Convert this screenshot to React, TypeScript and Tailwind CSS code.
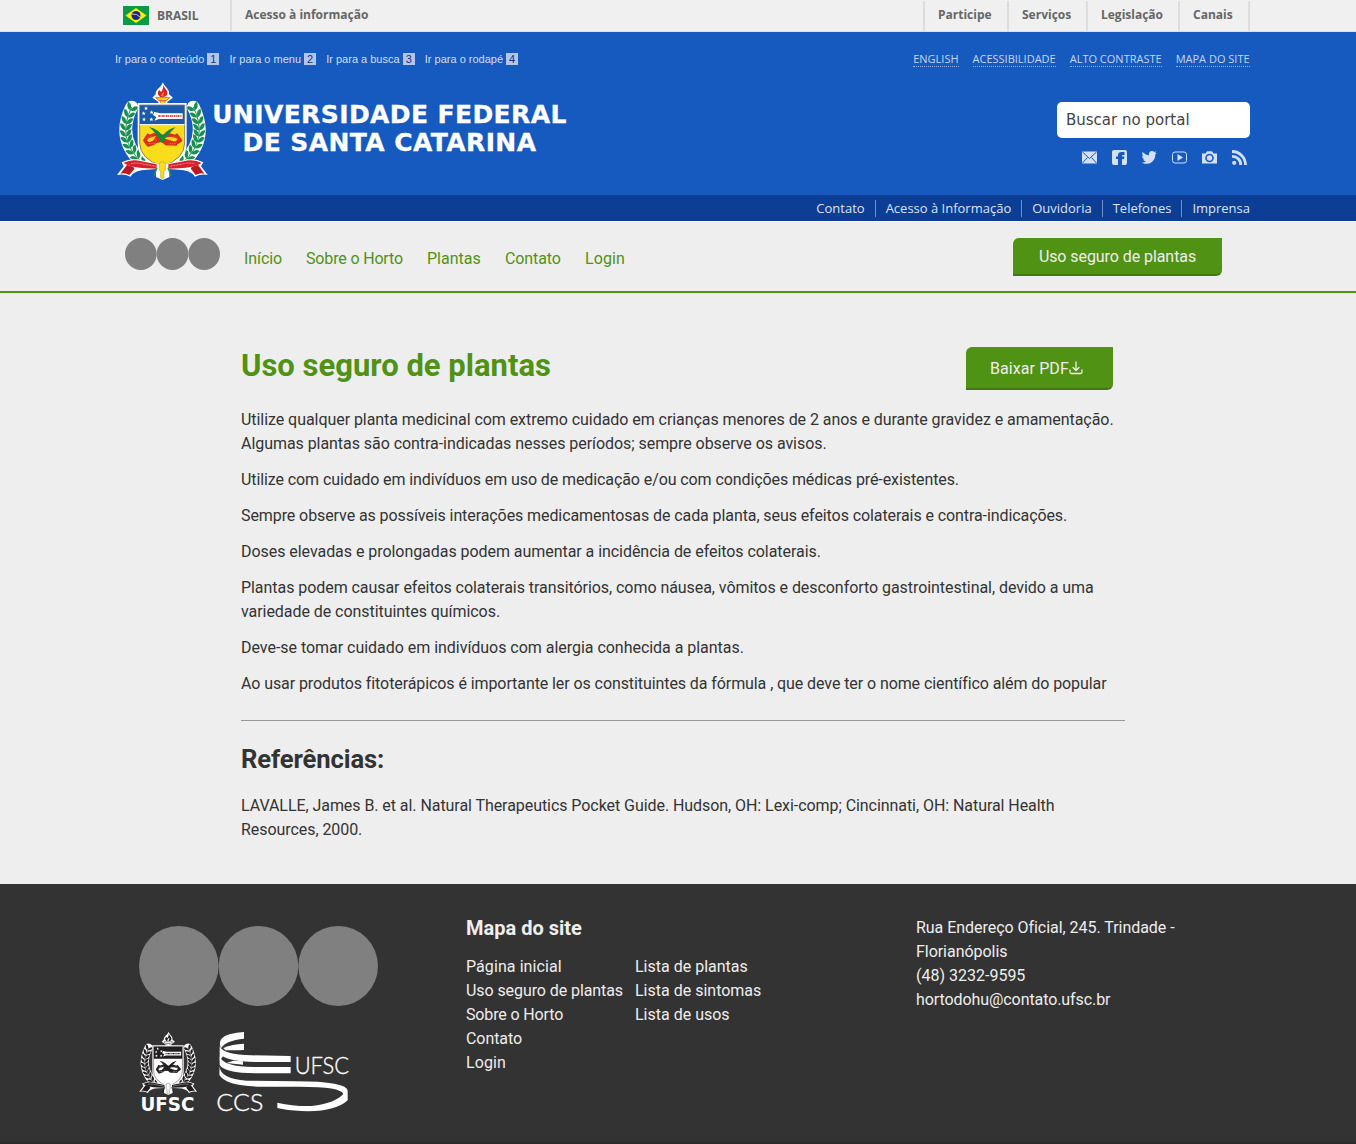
import React from "react";

type Leaf = { x: number; y: number; r: number };

function branchLeaves(): Leaf[] {
  const out: Leaf[] = [];
  const n = 9;
  for (let i = 0; i <= n; i++) {
    const t = i / n;
    const u = 1 - t;
    const x = u * u * 80 + 2 * u * t * 33 + t * t * 110;
    const y = u * u * 98 + 2 * u * t * 190 + t * t * 260;
    const angle = (Math.atan2(2 * u * 92 + 2 * t * 70, 2 * u * -47 + 2 * t * 77) * 180) / Math.PI;
    out.push({ x, y, r: angle });
  }
  return out;
}

const leaves = branchLeaves();

function Branch({ fill, stroke }: { fill: string; stroke: string }) {
  return (
    <g fill={fill}>
      <path d="M80 96Q33 190 110 262" fill="none" stroke={stroke} strokeWidth="38" strokeLinecap="round" />
      <path d="M80 96Q33 190 110 262" fill="none" stroke={fill} strokeWidth="3" />
      {leaves.map((l, i) => (
        <g key={i} transform={`translate(${l.x} ${l.y}) rotate(${l.r})`}>
          <path d="M9 0Q9 15 -11 18Q-13 3 9 0Z" />
          <path d="M9 0Q9 -15 -11 -18Q-13 -3 9 0Z" />
        </g>
      ))}
    </g>
  );
}

function Crest({ mono = false }: { mono?: boolean }) {
  const w = "#fff";
  const k = "#231f20";
  const red = mono ? k : "#d8202c";
  const green = mono ? k : "#17904f";
  const gold = mono ? w : "#f9dc1c";
  const figure = mono ? k : "#dc2f1c";
  return (
    <g strokeLinejoin="round">
      <Branch fill={green} stroke={w} />
      <g transform="translate(345 0) scale(-1 1)">
        <Branch fill={green} stroke={w} />
      </g>
      <path d="M174 22C168 38 150 44 152 58L142 68L160 80V92H187V80L204 68L192 58C196 44 178 36 174 22Z" fill={w} />
      <path d="M175 30C178 42 192 48 186 60Q182 68 166 66Q152 56 163 45Q168 54 171 48Q175 40 175 30Z" fill={red} />
      <path d="M167 62Q172 52 178 50Q176 60 174 65Z" fill={mono ? w : "#f47c20"} />
      <path d="M152 68H194L184 77H162Z" fill={gold} stroke={red} strokeWidth="2" />
      <path d="M166 77H180V92H166Z" fill={gold} stroke={red} strokeWidth="1.5" />
      <path d="M98 84H245V205Q245 258 172 280Q98 258 98 205Z" fill={w} />
      <path d="M104 90H239V204Q239 252 172 274Q104 252 104 204Z" fill={gold} stroke={mono ? k : "#555"} strokeWidth="2" />
      <path d="M105 91H238V148H105Z" fill={mono ? k : "#1c5aa8"} />
      <path d="M104 149H239" stroke={w} strokeWidth="3" />
      <path d="M148 111L166 115H233V132H162L148 137L154 126L144 120Z" fill={w} />
      <path d="M160 123H230" stroke={mono ? k : "#dc4855"} strokeWidth="6" strokeDasharray="5 1.5 3 2" />
      {[[123, 100], [140, 112], [116, 115], [117, 133], [139, 133]].map(([x, y]) => (
        <path key={`${x}-${y}`} transform={`translate(${x} ${y})`} d="M0-6L1.800-2H6L2.600 1L4 6L0 3L-4 6L-2.600 1L-6-2H-1.800Z" fill={w} />
      ))}
      <g fill="none" stroke={figure}>
        <path d="M132 178L120 196L130 210L146 204L158 186L184 206H210L226 196L212 178" strokeWidth="11" />
        <path d="M128 186L150 178L174 184L196 180L218 186M128 208L152 200L172 194L192 200L216 208" strokeWidth="10" />
        <path d="M128 190L140 184L154 196M192 196L206 184L220 192M132 206H150M194 206H214" stroke={mono ? w : "#f7a31c"} strokeWidth="2" strokeDasharray="4 3" />
      </g>
      <path d="M132 156Q164 162 181 194L171 203Q154 174 132 156Z" fill={mono ? k : "#168a3c"} />
      <path d="M212 156Q178 164 160 202L170 202Q188 180 212 156Z" fill={mono ? k : "#168a3c"} />
      <path
        d="M36 300L56 274L50 262Q78 248 110 256L173 269L236 256Q268 248 295 262L288 274L308 300Q288 296 270 305Q256 284 220 284L193 282V306L173 315L153 306V282L126 284Q90 284 76 305Q58 296 36 300Z"
        fill={w}
      />
      <path d="M46 296L66 270Q90 274 88 282L73 300Q60 292 46 296ZM298 296L279 270Q255 274 258 282L272 300Q286 292 298 296Z" fill={mono ? k : "#b91925"} />
      <path d="M55 264Q80 251 109 259L155 268V281L124 280Q80 279 55 264ZM290 264Q266 251 236 259L190 268V281L222 280Q266 279 290 264Z" fill={red} />
      <path d="M78 266Q96 262 114 267L152 274M268 266Q250 262 232 267L194 274" fill="none" stroke={mono ? w : "#f4b5b8"} strokeWidth="2.500" strokeDasharray="3 1.5" />
      <path d="M163 264L172 260L181 264V285L177 290V308L172 312L167 308V290L163 285Z" fill={gold} stroke={mono ? k : "#a99a22"} strokeWidth="1.500" />
      <path d="M156 279L147 302M189 279L198 302" stroke={mono ? k : "#249653"} strokeWidth="4" />
    </g>
  );
}

function Dots({ className }: { className: string }) {
  return (
    <svg viewBox="0 0 240 80" className={className} preserveAspectRatio="none" fill="#808080">
      <circle cx="40" cy="40" r="40" />
      <circle cx="120" cy="40" r="40" />
      <circle cx="200" cy="40" r="40" />
    </svg>
  );
}

function SocialIcons() {
  const bg = "#165abf";
  const fg = "#d3dff5";
  return (
    <svg viewBox="0 0 168 18" className="block h-[18px] w-[168px]">
      <path d="M1 2.500H16V14.500H1Z" fill={fg} />
      <path d="M1.500 3L8.500 9.500L15.500 3M1.500 14L6.500 8.500M15.500 14L10.500 8.500" fill="none" stroke={bg} />
      <rect x="31" y="1" width="15" height="15" rx="2" fill={fg} />
      <path d="M37 16V10H35V7.500H37V6Q37 3 40.500 3H43.500V6H42Q41 6 41 7V7.500H43.500L43 10H41V16Z" fill={bg} />
      <path
        d="M75.500 4L74.300 5.500C74.300 11.500 70 15 65 14.800C63 14.800 62 14.200 60.800 13.500C62.500 13.500 64 13.200 65 12.300C63.500 12.100 62.500 11.300 62.200 10.200H63.500C62 9.700 61 8.500 61.100 6.900L62.500 7.200C61 6 61 4.500 61.700 3C63.500 5 65.500 6.100 68 6.200C67.400 4 68.800 2.100 71 2.100C72 2.100 72.700 2.500 73.300 3L75.300 2.300L74.200 4.100Z"
        fill={fg}
      />
      <rect x="91.500" y="3" width="14" height="11" rx="2.500" fill="none" stroke={fg} />
      <path d="M96.500 5V12L102 8.500Z" fill={fg} />
      <path d="M121 4.500H124.500L126 2.300H131L132.500 4.500H136V14.500H121Z" fill={fg} />
      <circle cx="128.500" cy="9" r="3.500" fill={fg} stroke={bg} strokeWidth="1.600" />
      <circle cx="153.200" cy="13.800" r="2.100" fill={fg} />
      <path d="M151 7.300A8.300 8.300 0 0 1 159.700 16M151 2.500A13.300 13.300 0 0 1 164.500 16" fill="none" stroke={fg} strokeWidth="2.800" />
    </svg>
  );
}

const govLinks = [
  { t: "Participe", c: "w-[84px]" },
  { t: "Serviços", c: "w-[79px]" },
  { t: "Legislação", c: "w-[92px]" },
  { t: "Canais", c: "w-[70px]" },
];

const skips = [
  ["Ir para o conteúdo", "1"],
  ["Ir para o menu", "2"],
  ["Ir para a busca", "3"],
  ["Ir para o rodapé", "4"],
];

const navLinks = [
  { t: "Início", c: "w-[38px] tracking-[-0.08px]" },
  { t: "Sobre o Horto", c: "w-[97px] tracking-[-0.16px]" },
  { t: "Plantas", c: "w-[54px]" },
  { t: "Contato", c: "w-[56px] tracking-[-0.1px]" },
  { t: "Login", c: "w-[40px] tracking-[0.1px]" },
];

const paragraphs = [
  {
    t: "Utilize qualquer planta medicinal com extremo cuidado em crianças menores de 2 anos e durante gravidez e amamentação. Algumas plantas são contra-indicadas nesses períodos; sempre observe os avisos.",
    c: "tracking-[-0.055px] w-[878px]",
  },
  { t: "Utilize com cuidado em indivíduos em uso de medicação e/ou com condições médicas pré-existentes.", c: "tracking-[-0.094px]" },
  { t: "Sempre observe as possíveis interações medicamentosas de cada planta, seus efeitos colaterais e contra-indicações.", c: "tracking-[-0.087px]" },
  { t: "Doses elevadas e prolongadas podem aumentar a incidência de efeitos colaterais.", c: "tracking-[-0.05px]" },
  {
    t: "Plantas podem causar efeitos colaterais transitórios, como náusea, vômitos e desconforto gastrointestinal, devido a uma variedade de constituintes químicos.",
    c: "tracking-[-0.055px]",
  },
  { t: "Deve-se tomar cuidado em indivíduos com alergia conhecida a plantas.", c: "tracking-[-0.03px]" },
  { t: "Ao usar produtos fitoterápicos é importante ler os constituintes da fórmula , que deve ter o nome científico além do popular", c: "tracking-[-0.085px]" },
];

export default function App() {
  return (
    <div className="flex h-[1144px] w-[1356px] flex-col overflow-hidden bg-[#eeeeee] font-['Roboto',sans-serif] text-base text-[#333333]">
      <div className="flex h-8 shrink-0 items-start border-b border-[#dcdfe5] bg-[#f0f0f0] pl-[123px] font-['Open_Sans',sans-serif] text-[12px] font-bold text-[#666666]">
        <svg viewBox="0 0 26 19" className="mt-[6px] h-[19px] w-[26px]">
          <path fill="#0a9b49" d="M0 0H26V19H0Z" />
          <path fill="#fdf100" d="M13 2L23.500 9.500L13 17L2.500 9.500Z" />
          <circle cx="13" cy="9.500" r="4.500" fill="#21277f" />
          <path d="M9 8Q14 7.500 17 11" fill="none" stroke="#b6c6dc" />
        </svg>
        <span className="ml-2 w-[73px] leading-[31px]">BRASIL</span>
        <div className="flex h-[31px] grow border-l-2 border-[#dddddd] pl-[13px] leading-[30px]">
          <span>Acesso à informação</span>
        </div>
        <div className="mr-[106px] mt-px flex h-[30px] border-r-2 border-[#dddddd] leading-[28px]">
          {govLinks.map((l) => (
            <span key={l.t} className={`border-l-2 border-[#dddddd] pl-[13px] ${l.c}`}>
              {l.t}
            </span>
          ))}
        </div>
      </div>

      <header className="h-[163px] shrink-0 bg-[#165abf] pl-[115px] pr-[106px]">
        <div className="flex h-[46px] items-start justify-between pt-5">
          <div className="flex gap-[10px] font-['Liberation_Sans',sans-serif] text-[11px] leading-[14px] text-[#d3dff5]">
            {skips.map(([t, n]) => (
              <span key={n} className="flex">
                {t}
                <b className="ml-[3px] mt-px h-3 w-[12.200px] bg-[#b3c5ec] text-center font-normal leading-[13px] text-[#173372]">{n}</b>
              </span>
            ))}
          </div>
          <div className="mr-[0.400px] flex gap-[14px] font-['Open_Sans',sans-serif] text-[11px] leading-[14px] text-[#c5d6f2]">
            {["ENGLISH", "ACESSIBILIDADE", "ALTO CONTRASTE", "MAPA DO SITE"].map((t) => (
              <span key={t} className="border-b border-dotted border-[#8fb0e4]">
                {t}
              </span>
            ))}
          </div>
        </div>
        <div className="flex justify-between">
          <div className="flex">
            <svg viewBox="30 9 285 315" className="h-[105px] w-[95px]">
              <Crest />
            </svg>
            <div className="mt-[23px] w-[359px] text-center font-['DejaVu_Sans',sans-serif] text-[25px] font-bold leading-[28px] tracking-[0.400px] text-white [-webkit-text-stroke:0.3px_#fff]">
              <div className="whitespace-nowrap">UNIVERSIDADE FEDERAL</div>
              <div className="whitespace-nowrap">DE SANTA CATARINA</div>
            </div>
          </div>
          <div className="flex w-[193px] flex-col pt-6">
            <div className="h-9 rounded-[5px] bg-white pl-[9px] font-['DejaVu_Sans',sans-serif] text-[15px] leading-[37px] text-[#444444]">
              Buscar no portal
            </div>
            <div className="ml-6 mt-[11px]">
              <SocialIcons />
            </div>
          </div>
        </div>
      </header>

      <div className="flex h-[26px] shrink-0 items-center justify-end bg-[#0c3e96] pr-[106px] font-['Open_Sans',sans-serif] text-[13px] leading-[17px] text-[#dbe4f5]">
        {["Contato", "Acesso à Informação", "Ouvidoria", "Telefones", "Imprensa"].map((t, i) => (
          <span key={t} className={i ? "ml-[10px] border-l border-[#6f90cc] pl-[10px]" : ""}>
            {t}
          </span>
        ))}
      </div>

      <nav className="flex h-[72px] shrink-0 items-start border-b-2 border-[#509214] shadow-[inset_0_1px_0_#ffffff]">
        <Dots className="ml-[125px] mt-[17px] h-8 w-[95px]" />
        <div className="ml-6 mt-[26px] flex gap-6 whitespace-nowrap text-[#509214]">
          {navLinks.map((l) => (
            <a key={l.t} className={l.c}>
              {l.t}
            </a>
          ))}
        </div>
        <a className="ml-auto mr-[134px] mt-[17px] h-[38px] w-[209px] rounded-br-[6px] rounded-tl-[6px] border-b-2 border-[#40790e] bg-[#509214] text-center leading-[37px] tracking-[-0.070px] text-[#eeeeee]">
          Uso seguro de plantas
        </a>
      </nav>

      <main className="ml-[241px] h-[591px] w-[884px] shrink-0 pt-[54px]">
        <div className="flex h-[61px] items-start justify-between pr-3">
          <h1 className="text-[31px] font-bold leading-[38px] text-[#509214]">Uso seguro de plantas</h1>
          <a className="flex h-[43px] w-[147px] items-center rounded-br-[6px] rounded-tl-[6px] border-b-2 border-[#40790e] bg-[#509214] pl-6 pt-[2px] tracking-[0.080px] text-[#eeeeee]">
            Baixar PDF
            <svg viewBox="0 0 14 14" className="mb-[2px] h-[14px] w-[14px]" fill="none" stroke="#eeeeee" strokeWidth="1.300" strokeLinecap="round" strokeLinejoin="round">
              <path d="M7 1V9.500M4 6.500L7 9.500L10 6.500M1 9V11Q1 12.500 2.500 12.500H11.500Q13 12.500 13 11V9" />
            </svg>
          </a>
        </div>
        {paragraphs.map((p) => (
          <p key={p.t} className={`mb-3 ${p.c}`}>
            {p.t}
          </p>
        ))}
        <hr className="mt-6 border-[#999999]" />
        <h2 className="mt-[23px] text-[25.600px] font-bold leading-[30px] tracking-[-0.100px]">Referências:</h2>
        <p className="mt-5 tracking-[-0.060px]">
          LAVALLE, James B. et al. Natural Therapeutics Pocket Guide. Hudson, OH: Lexi-comp; Cincinnati, OH: Natural Health Resources, 2000.
        </p>
      </main>

      <footer className="flex grow items-start bg-[#333333] pl-[139px] text-[#eeeeee]">
        <div className="w-[327px] pt-[42px]">
          <Dots className="h-20 w-[239px]" />
          <div className="mt-[25px] flex">
            <svg viewBox="0 0 60 84" className="h-[84px] w-[60px] overflow-visible">
              <g transform="translate(-7.500 -4) scale(.213 .216)">
                <Crest mono />
              </g>
              <text x="1.500" y="80" textLength="54" lengthAdjust="spacingAndGlyphs" fontFamily="DejaVu Sans" fontWeight="bold" fontSize="19.500" fill="#fff">
                UFSC
              </text>
            </svg>
            <svg viewBox="36 33 399 252" className="ml-[18px] h-[84px] w-[133px] overflow-visible" fill="#fff">
              <path d="M117 36V56Q62 61 48 85Q35 54 74 43Q94 37 117 36Z" />
              <path d="M117 71V90Q80 91 61 91L55 84Q82 72 117 71Z" />
              <path d="M44 78Q54 105 140 106L257 108V126H160Q58 126 44 98Z" />
              <path d="M44 110Q57 140 145 141H257V160H160Q56 159 44 134Z" />
              <path d="M85 122L114 124V134L65 129ZM44 98L55 107L44 123Z" />
              <path d="M44 137Q44 176 125 182L270 184Q431 184 428 215V241Q390 277 290 273Q245 271 217 264V248Q270 260 320 258Q390 250 415 222Q408 200 285 200H170Q60 198 43 164Z" />
              <g fontFamily="Lato" fontWeight="300" stroke="#fff" strokeWidth="1">
                <text x="269" y="163" fontSize="72" textLength="163" lengthAdjust="spacingAndGlyphs">UFSC</text>
                <text x="34" y="274" fontSize="72" textLength="141" lengthAdjust="spacingAndGlyphs">CCS</text>
              </g>
            </svg>
          </div>
        </div>
        <div className="w-[450px] pt-8">
          <h5 className="mb-[15px] text-xl font-bold leading-6">Mapa do site</h5>
          <div className="flex gap-3 whitespace-nowrap">
            <ul className="w-[157px]">
              <li className="tracking-[0.080px]">Página inicial</li>
              <li className="tracking-[-0.080px]">Uso seguro de plantas</li>
              <li className="tracking-[-0.140px]">Sobre o Horto</li>
              <li className="tracking-[-0.080px]">Contato</li>
              <li className="tracking-[0.100px]">Login</li>
            </ul>
            <ul>
              <li>Lista de plantas</li>
              <li>Lista de sintomas</li>
              <li>Lista de usos</li>
            </ul>
          </div>
        </div>
        <div className="w-[290px] pt-8">
          <div className="tracking-[-0.040px]">Rua Endereço Oficial, 245. Trindade - Florianópolis</div>
          <div>(48) 3232-9595</div>
          <div className="tracking-[-0.080px]">hortodohu@contato.ufsc.br</div>
        </div>
      </footer>
      <div className="h-[2px] shrink-0 bg-[#2b2b2b]" />
    </div>
  );
}
